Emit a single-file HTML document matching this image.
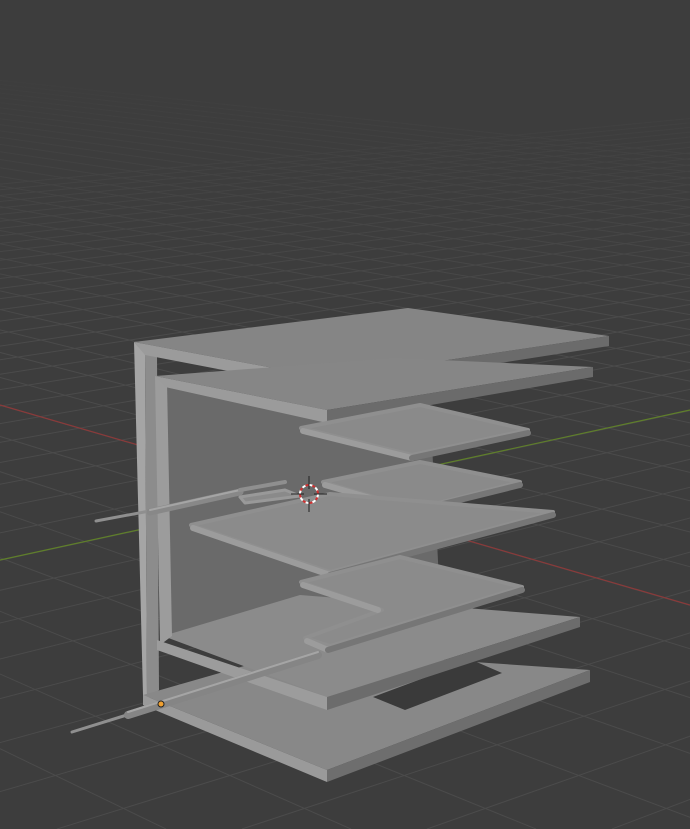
<!DOCTYPE html>
<html><head><style>
html,body{margin:0;padding:0;background:#3d3d3d;width:690px;height:829px;overflow:hidden}
svg{display:block}
</style></head><body>
<svg id="s" width="690" height="829" viewBox="0 0 690 829" xmlns="http://www.w3.org/2000/svg">
<defs>
<linearGradient id="fade" x1="0" y1="0" x2="0" y2="829" gradientUnits="userSpaceOnUse">
<stop offset="0" stop-color="#fff" stop-opacity="0"/>
<stop offset="0.1" stop-color="#fff" stop-opacity="0.15"/>
<stop offset="0.4" stop-color="#fff" stop-opacity="1"/>
<stop offset="1" stop-color="#fff" stop-opacity="1"/>
</linearGradient>
<mask id="m"><rect width="690" height="829" fill="url(#fade)"/></mask>
</defs>
<rect width="690" height="829" fill="#3d3d3d"/>
<g id="grid" mask="url(#m)" stroke="#4b4b4b" stroke-width="1"></g>
<line x1="0" y1="405" x2="690" y2="605" stroke="#8a3a3a" stroke-width="1.2"/>
<line x1="0" y1="560" x2="690" y2="410" stroke="#5f7f2a" stroke-width="1.2"/>

<g stroke-linejoin="round">
<!-- inner back wall -->
<polygon points="160,385 330,420 430,405 440,600 330,680 167,632" fill="#6a6a6a"/>
<!-- outer left wall -->
<polygon points="134,342 145,354 147,700 143,700 143,695" fill="#a5a5a5"/>
<polygon points="145,354 157,356 159,690 147,700" fill="#8c8c8c"/>
<!-- outer bottom plate -->
<polygon points="143,695 300,650 590,670 327,770" fill="#888"/>
<polygon points="373,697 472,660 502,673 405,710" fill="#3a3a3a"/>
<polygon points="327,770 590,670 590,682 327,782" fill="#6e6e6e"/>
<polygon points="143,695 327,770 327,782 143,705" fill="#9a9a9a"/>
<!-- inner C bottom plate -->
<polygon points="163,636 300,595 580,617 327,697" fill="#8b8b8b"/>
<polygon points="327,697 580,617 580,627 327,710" fill="#6c6c6c"/>
<polygon points="157,640 327,697 327,710 157,650" fill="#9c9c9c"/>
<!-- inner C vertical -->
<polygon points="155,376 167,382 172,636 160,645" fill="#9c9c9c"/>
<!-- top plate -->
<polygon points="134,342 408,308 609,336 327,378" fill="#858585"/>
<polygon points="327,378 609,336 609,346 327,390" fill="#6b6b6b"/>
<polygon points="134,342 327,378 327,390 145,355" fill="#9b9b9b"/>
<!-- second plate -->
<polygon points="155,376 395,358 593,367 327,410" fill="#868686"/>
<polygon points="327,410 593,367 593,377 327,423" fill="#6b6b6b"/>
<polygon points="155,376 327,410 327,423 165,387" fill="#9b9b9b"/>
</g>

<!-- shelves -->
<g stroke-linejoin="round" stroke-linecap="round">
<polygon points="301,428 420,405 528,430 412,455" fill="#8a8a8a" stroke="#8f8f8f" stroke-width="4"/>
<line x1="303" y1="431" x2="412" y2="458" stroke="#9c9c9c" stroke-width="6"/>
<line x1="412" y1="458" x2="528" y2="433" stroke="#767676" stroke-width="6"/>

<polygon points="323,482 420,462 520,482 415,509" fill="#8a8a8a" stroke="#8f8f8f" stroke-width="4"/>
<line x1="325" y1="485" x2="415" y2="511" stroke="#9c9c9c" stroke-width="6"/>
<line x1="415" y1="511" x2="520" y2="485" stroke="#767676" stroke-width="6"/>
<polygon points="240,497 285,490 300,496 245,503" fill="#8a8a8a" stroke="#999" stroke-width="3"/>

<polygon points="191,525 330,494 553,512 330,572" fill="#8b8b8b" stroke="#8f8f8f" stroke-width="4"/>
<line x1="193" y1="528" x2="330" y2="575" stroke="#9c9c9c" stroke-width="6"/>
<line x1="330" y1="575" x2="553" y2="515" stroke="#767676" stroke-width="6"/>

<polygon points="301,582 400,557 522,587 330,646 305,638 382,610" fill="#8b8b8b" stroke="#8f8f8f" stroke-width="4"/>
<line x1="303" y1="585" x2="378" y2="610" stroke="#9c9c9c" stroke-width="6"/>
<line x1="307" y1="641" x2="328" y2="650" stroke="#9c9c9c" stroke-width="6"/>
<line x1="328" y1="650" x2="522" y2="590" stroke="#767676" stroke-width="6"/>
</g>

<!-- rods -->
<g stroke-linecap="round">
<line x1="96" y1="521" x2="155" y2="510" stroke="#8f8f8f" stroke-width="3"/>
<line x1="150" y1="512" x2="240" y2="492" stroke="#888" stroke-width="7"/>
<line x1="150" y1="510" x2="240" y2="490" stroke="#a5a5a5" stroke-width="2"/>
<line x1="240" y1="490" x2="285" y2="482" stroke="#8f8f8f" stroke-width="4"/>
<line x1="72" y1="732" x2="130" y2="714" stroke="#8f8f8f" stroke-width="3"/>
<line x1="128" y1="715" x2="318" y2="655" stroke="#858585" stroke-width="8"/>
<line x1="128" y1="712" x2="318" y2="652" stroke="#a5a5a5" stroke-width="2"/>
</g>
<circle cx="161" cy="704" r="3" fill="#f0a030" stroke="#222" stroke-width="1"/>

<!-- 3D cursor -->
<circle cx="309" cy="494" r="9" fill="none" stroke="#fff" stroke-width="2" stroke-dasharray="4 3"/>
<circle cx="309" cy="494" r="9" fill="none" stroke="#d03030" stroke-width="2" stroke-dasharray="3 4" stroke-dashoffset="3.5"/>
<line x1="309" y1="476" x2="309" y2="489" stroke="#222" stroke-width="1"/>
<line x1="309" y1="499" x2="309" y2="512" stroke="#222" stroke-width="1"/>
<line x1="291" y1="494" x2="304" y2="494" stroke="#222" stroke-width="1"/>
<line x1="314" y1="494" x2="327" y2="494" stroke="#222" stroke-width="1"/>
</svg>
<script>
var g=document.getElementById('grid'),ns='http://www.w3.org/2000/svg';
function L(x1,y1,x2,y2){var l=document.createElementNS(ns,'line');l.setAttribute('x1',x1);l.setAttribute('y1',y1);l.setAttribute('x2',x2);l.setAttribute('y2',y2);g.appendChild(l);}
var hy=-109,A=-1773,B=3085;
for(var k=-40;k<=30;k++){L(A,hy,1461+k*185,829);}
for(var k=-30;k<=40;k++){L(B,hy,-1238+k*185,829);}
</script>
</body></html>
